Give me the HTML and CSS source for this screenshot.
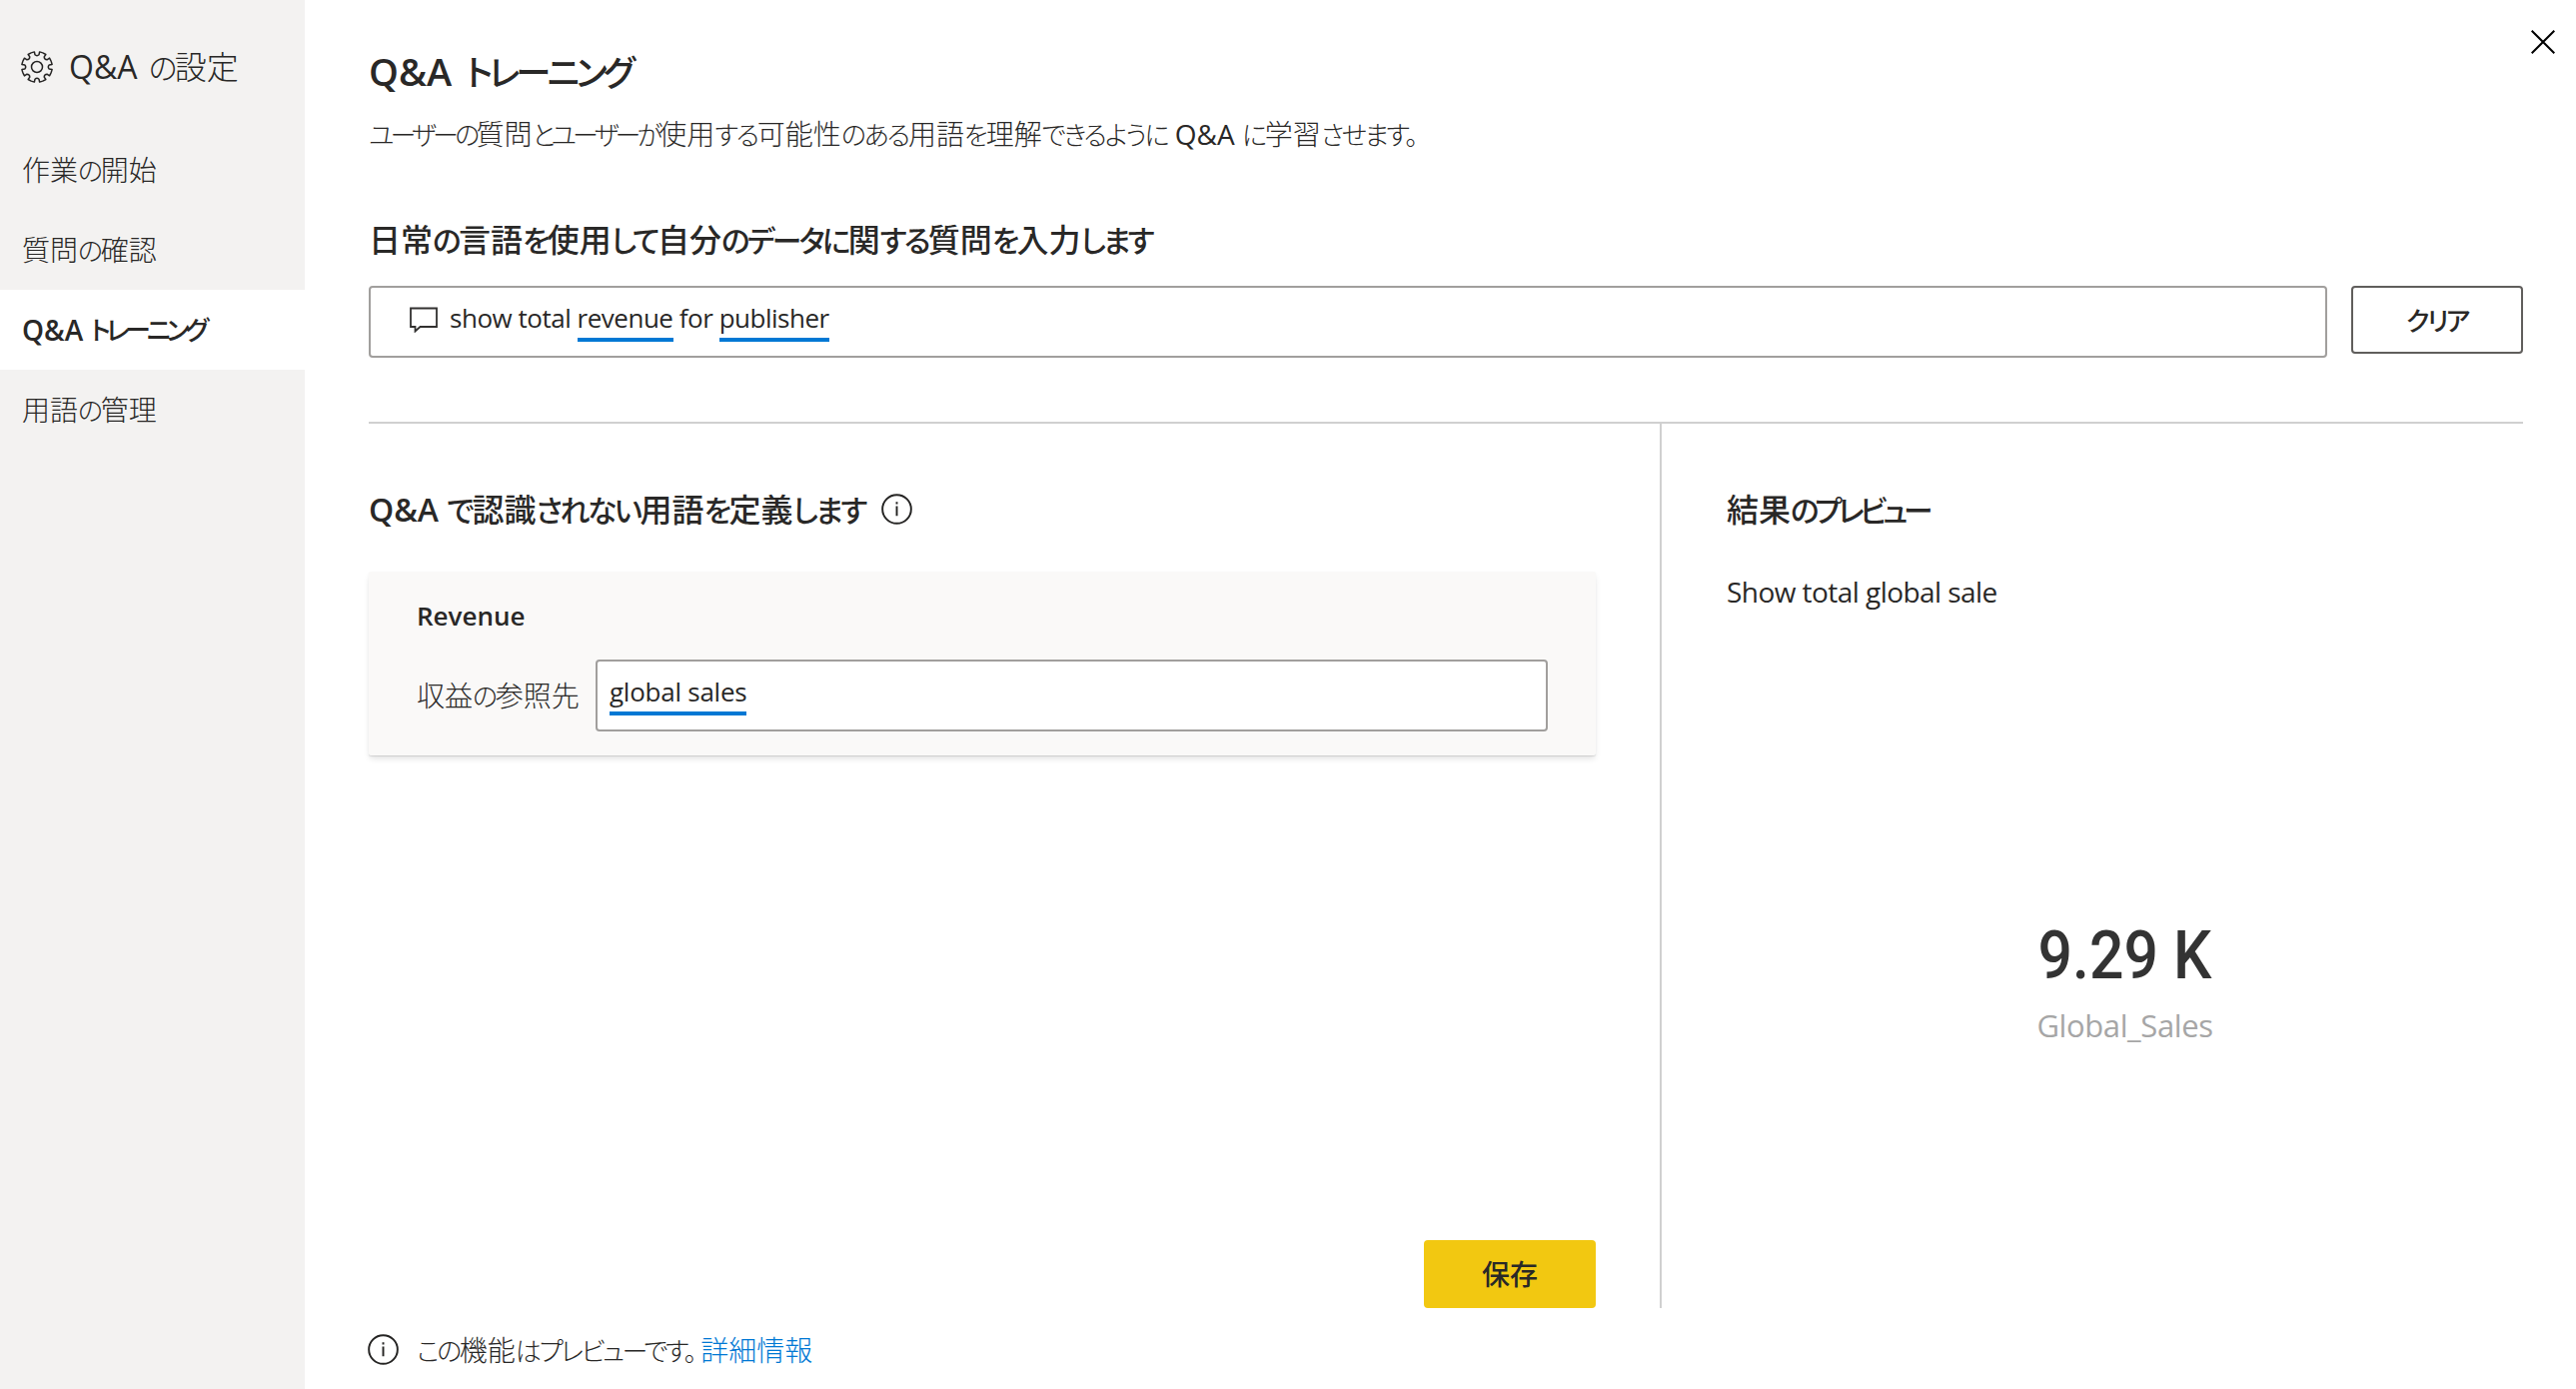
FILE: index.html
```
<!DOCTYPE html>
<html lang="ja">
<head>
<meta charset="utf-8">
<title>Q&amp;A の設定</title>
<link rel="stylesheet" href="styles.css">
</head>
<body>
<div class="app">
  <aside class="sidebar">
    <div class="sidebar-title">
      <svg class="gear" viewBox="-16 -16 32 32" fill="none" stroke="#252423" stroke-width="1.5" stroke-linejoin="round">
        <defs><path id="cog" d="M-5.850-14.120-2.600-15.100-2-12.200Q0-10.400 2-12.200L2.600-15.100 5.850-14.120"/></defs>
        <use href="#cog"/><use href="#cog" transform="rotate(45)"/><use href="#cog" transform="rotate(90)"/><use href="#cog" transform="rotate(135)"/><use href="#cog" transform="rotate(180)"/><use href="#cog" transform="rotate(225)"/><use href="#cog" transform="rotate(270)"/><use href="#cog" transform="rotate(315)"/>
        <circle r="5.500"/>
      </svg>
      <span><span class="latin">Q&amp;A</span> <span class="kana">の</span>設定</span>
    </div>
    <nav class="nav">
      <a class="nav-item"><span>作業<span class="kana">の</span>開始</span></a>
      <a class="nav-item"><span>質問<span class="kana">の</span>確認</span></a>
      <a class="nav-item active"><span class="latin">Q&amp;A</span>&nbsp;<span class="kana kata">トレーニング</span></a>
      <a class="nav-item"><span>用語<span class="kana">の</span>管理</span></a>
    </nav>
  </aside>
  <main class="main">
    <h1 class="title"><span class="latin">Q&amp;A</span> <span class="kana kata">トレーニング</span></h1>
    <p class="subtitle"><span class="kana kata">ユーザーの</span>質問<span class="kana kata">とユーザーが</span>使用<span class="kana">する</span>可能性<span class="kana">のある</span>用語<span class="kana">を</span>理解<span class="kana">できるように</span> <span class="latin">Q&amp;A</span> <span class="kana">に</span>学習<span class="kana">させます。</span></p>
    <h2 class="heading ask">日常<span class="kana">の</span>言語<span class="kana">を</span>使用<span class="kana">して</span>自分<span class="kana">のデータに</span>関<span class="kana">する</span>質問<span class="kana">を</span>入力<span class="kana">します</span></h2>
    <div class="query">
      <div class="query-input">
        <svg class="chat" viewBox="0 0 28 26" fill="none" stroke="#323130" stroke-width="1.8"><path d="M1 1.500H27V20H10.500L5.500 24.500V20H1Z"/></svg>
        <span class="text">show total <span class="term">revenue</span> for <span class="term">publisher</span></span>
      </div>
      <button class="btn"><span class="kana">クリア</span></button>
    </div>
    <div class="workspace">
      <section class="define">
        <h2 class="heading"><span><span class="latin">Q&amp;A</span> <span class="kana">で</span>認識<span class="kana">されない</span>用語<span class="kana">を</span>定義<span class="kana">します</span></span>
          <svg class="info" viewBox="0 0 32 32"><circle cx="16" cy="16" r="14.800" fill="none" stroke="#252423" stroke-width="2"/><path d="M15 13h2v10h-2zM15 8.500h2v2.400h-2z" fill="#252423"/></svg></h2>
        <div class="card">
          <div class="card-title">Revenue</div>
          <div class="card-row">
            <label class="label">収益<span class="kana">の</span>参照先</label>
            <div class="field"><span class="text"><span class="term">global sales</span></span></div>
          </div>
        </div>
        <button class="btn save">保存</button>
      </section>
      <section class="preview">
        <h2 class="heading"><span>結果<span class="kana kata">のプレビュー</span></span></h2>
        <p class="restated">Show total global sale</p>
        <div class="kpi">
          <div class="kpi-value">9.29 K</div>
          <div class="kpi-label">Global_Sales</div>
        </div>
      </section>
    </div>
    <footer class="footer">
      <svg class="info" viewBox="0 0 32 32"><circle cx="16" cy="16" r="14.800" fill="none" stroke="#252423" stroke-width="2"/><path d="M15 13h2v10h-2zM15 8.500h2v2.400h-2z" fill="#252423"/></svg>
      <span class="footer-text"><span class="kana">この</span>機能<span class="kana">はプレビューです。</span></span><a class="link">詳細情報</a>
    </footer>
  </main>
  <button class="close" aria-label="閉じる"><svg viewBox="0 0 24 24" stroke="#000" stroke-width="2"><path d="M.7.7 23.300 23.300M23.300.7.7 23.300"/></svg></button>
</div>
</body>
</html>
```
FILE: styles.css
```
* { box-sizing: border-box; }
body {
  margin: 0;
  font-family: "Open Sans", "Noto Sans CJK JP", sans-serif;
  font-size: 28px;
  line-height: 40px;
  color: #292827;
  background: #fff;
}
h1, h2, p { margin: 0; }
button { font: inherit; color: inherit; padding: 0; }
.app { display: flex; height: 1390px; position: relative; overflow: hidden; }
.kana { font-size: .93em; line-height: 1; font-feature-settings: "palt"; letter-spacing: -0.092em; }
.kana.kata { letter-spacing: -0.145em; }

.sidebar { width: 305px; flex: none; background: #f3f2f1; font-weight: 300; }
.sidebar .latin, .subtitle .latin { font-weight: 400; }
.sidebar-title { display: flex; align-items: center; gap: 16px; height: 130px; padding: 3px 0 0 21px; font-size: 32px; word-spacing: 3px; }
.gear { width: 32px; height: 32px; }
.nav-item { display: flex; align-items: center; height: 80px; padding-left: 22px; }
.nav-item.active { background: #fff; font-weight: 500; }
.active .kana.kata { letter-spacing: -0.16em; }
.active .latin, .title .latin, .heading .latin { font-weight: 600; }

.main { flex: 1; display: flex; flex-direction: column; padding: 46px 53px 0 64px; }
.title { font-size: 38px; line-height: 50px; font-weight: 500; word-spacing: 4px; }
.title .kana.kata { letter-spacing: -0.11em; }
.subtitle { height: 40px; margin-top: 18px; font-weight: 300; white-space: nowrap; }
.subtitle .kana { letter-spacing: -0.085em; }
.subtitle .kana.kata { letter-spacing: -0.145em; }
.heading { display: flex; align-items: center; height: 44px; font-size: 32px; line-height: 44px; font-weight: 500; }
.ask { display: block; margin: 64px 0 24px; }
.query { display: flex; align-items: flex-start; gap: 24px; }
.query-input, .field { flex: 1; height: 72px; border: 2px solid #a19f9d; border-radius: 4px; background: #fff; }
.query-input { display: flex; align-items: flex-start; gap: 12px; padding: 10px 0 0 39px; }
.text { font-size: 26px; letter-spacing: -0.48px; }
.field .text { letter-spacing: -0.25px; }
.chat { width: 28px; height: 26px; margin-top: 9px; }
.term { padding-bottom: 2px; border-bottom: 4px solid #0078d4; }
.btn { width: 172px; height: 68px; border: 2px solid #605e5c; border-radius: 4px; background: #fff; font-weight: 500; }

.workspace { display: flex; height: 887px; margin-top: 64px; border-top: 2px solid #d0d0d0; }
.define { width: 1294px; display: flex; flex-direction: column; padding: 64px 64px 0 0; border-right: 2px solid #d0d0d0; }
.define .heading .kana { letter-spacing: -0.08em; }
.info { width: 31px; height: 31px; }
.define .info { margin: -2px 0 0 16px; }
.card { height: 184px; margin-top: 40px; padding: 24px 48px 24px 48px; background: #faf9f8; border-radius: 2px; box-shadow: 0 4px 6px -1px rgba(0, 0, 0, .12), 0 1px 1px rgba(0, 0, 0, .11); }
.card-title { font-size: 26px; font-weight: 600; }
.card-row { display: flex; align-items: center; margin-top: 24px; }
.label { width: 179px; font-weight: 300; }
.field { padding: 9px 0 0 12px; }
.save { margin-top: auto; align-self: flex-end; border: 0; background: #f2c811; }

.preview { flex: 1; padding: 64px 0 0 65px; }
.restated { margin-top: 40px; letter-spacing: -0.55px; }
.kpi { display: flex; flex-direction: column; align-items: center; margin-top: 305px; }
.kpi-value { font: 500 66px/80px Roboto, sans-serif; color: #333; transform: scaleX(.92); }
.kpi-label { margin-top: 9px; font-size: 31px; letter-spacing: -0.4px; color: #a6a6a6; }

.footer { display: flex; align-items: center; height: 40px; margin-top: 22px; font-weight: 300; }
.footer .info { margin: -2px 0 0 -1px; }
.footer-text { margin-left: 18px; }
.link { color: #0078d4; margin-left: 6px; }
.close { position: absolute; right: 21px; top: 30px; width: 24px; height: 24px; border: 0; background: none; }
.close svg { display: block; }
```
